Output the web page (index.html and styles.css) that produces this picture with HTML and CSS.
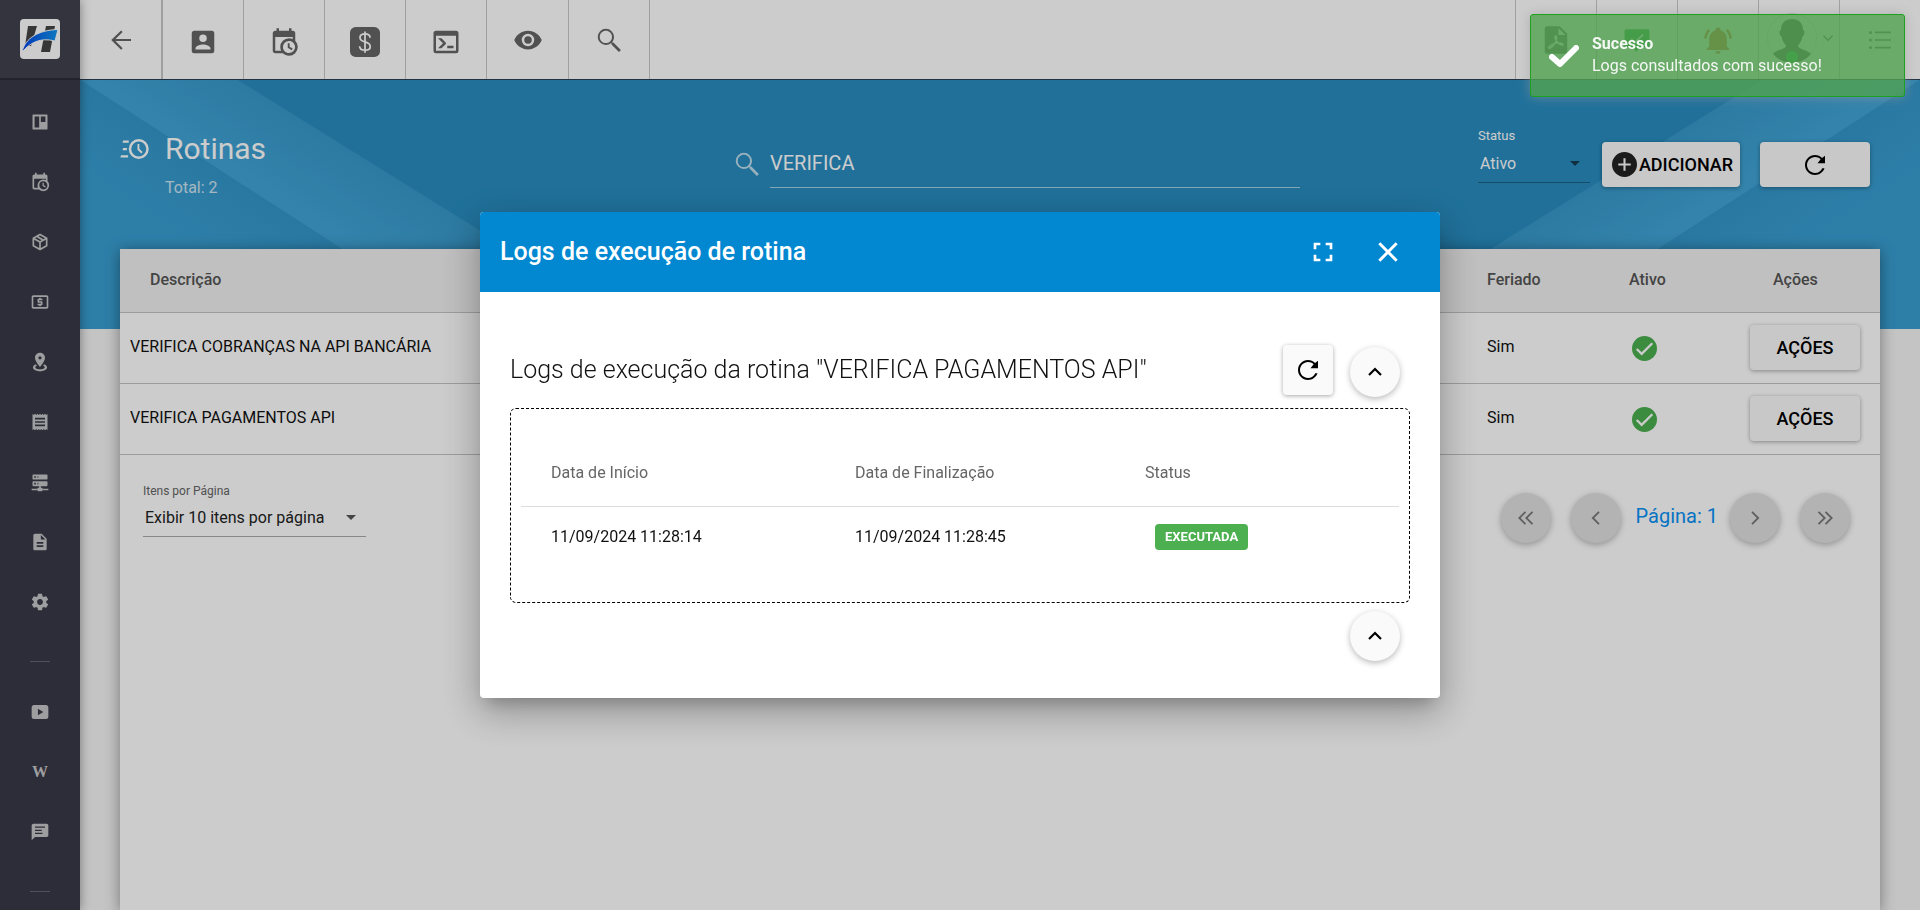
FILE: index.html
```html
<!DOCTYPE html>
<html lang="pt-BR">
<head>
<meta charset="utf-8">
<meta name="viewport" content="width=device-width, initial-scale=1">
<title>Rotinas</title>
<link rel="stylesheet" href="styles.css">
</head>
<body>
<svg class="sprite" aria-hidden="true">
  <symbol id="i-back" viewBox="0 0 24 24"><path d="M20,11.200V12.800H7.600L13.300,18.500L12.080,19.700L4.160,12L12.080,4.300L13.300,5.500L7.600,11.200H20Z"/></symbol>
  <symbol id="i-account" viewBox="0 0 24 24"><path d="M6,17C6,15 10,13.9 12,13.9C14,13.9 18,15 18,17V18H6M15,9A3,3 0 0,1 12,12A3,3 0 0,1 9,9A3,3 0 0,1 12,6A3,3 0 0,1 15,9M3,5V19A2,2 0 0,0 5,21H19A2,2 0 0,0 21,19V5A2,2 0 0,0 19,3H5C3.89,3 3,3.9 3,5Z"/></symbol>
  <symbol id="i-calclock" viewBox="0 0 24 24"><path d="M15,13H16.5V15.82L18.94,17.23L18.19,18.53L15,16.69V13M19,8H5V19H9.67C9.24,18.09 9,17.07 9,16A7,7 0 0,1 16,9C17.07,9 18.09,9.24 19,9.67V8M5,21C3.89,21 3,20.1 3,19V5C3,3.89 3.89,3 5,3H6V1H8V3H16V1H18V3H19A2,2 0 0,1 21,5V11.1C22.24,12.36 23,14.09 23,16A7,7 0 0,1 16,23C14.09,23 12.36,22.24 11.1,21H5M16,11.15A4.85,4.85 0 0,0 11.15,16C11.15,18.68 13.32,20.85 16,20.85A4.85,4.85 0 0,0 20.85,16C20.85,13.32 18.68,11.15 16,11.15Z"/></symbol>
  <symbol id="i-dollar" viewBox="0 0 24 24"><rect width="24" height="24" rx="4.500"/><path d="M12 3.500v17M16 8.500c0-2-1.600-3-4-3s-4 1-4 3c0 4.500 8.200 2.200 8.200 7 0 2-1.700 3-4.200 3s-4.300-1.100-4.300-3.200" fill="none" stroke="#fff" stroke-width="1.400"/></symbol>
  <symbol id="i-console" viewBox="0 0 24 24"><path fill-rule="evenodd" d="M4 3H20A2 2 0 0 1 22 5V19A2 2 0 0 1 20 21H4A2 2 0 0 1 2 19V5A2 2 0 0 1 4 3M4 7V19H20V7Z"/><path d="M13 17v-2h5v2zM9.600 13L5.600 9h2.800l3.300 3.300c.4.400.4 1 0 1.400L8.400 17H5.600z"/></symbol>
  <symbol id="i-eye" viewBox="0 0 24 24"><path d="M12,9A3,3 0 0,0 9,12A3,3 0 0,0 12,15A3,3 0 0,0 15,12A3,3 0 0,0 12,9M12,17A5,5 0 0,1 7,12A5,5 0 0,1 12,7A5,5 0 0,1 17,12A5,5 0 0,1 12,17M12,4.5C7,4.5 2.730,7.610 1,12C2.730,16.390 7,19.5 12,19.5C17,19.5 21.270,16.390 23,12C21.270,7.610 17,4.5 12,4.5Z"/></symbol>
  <symbol id="i-search" viewBox="0 0 24 24"><path d="M9.5,3A6.5,6.5 0 0,1 16,9.5C16,11.11 15.41,12.59 14.44,13.73L14.71,14H15.5L21.5,20L20,21.5L14,15.5V14.71L13.73,14.44C12.59,15.41 11.11,16 9.5,16A6.5,6.5 0 0,1 3,9.5A6.5,6.5 0 0,1 9.5,3M9.5,4.600C7,4.600 4.600,6.600 4.600,9.500C4.600,12.400 7,14.400 9.5,14.400C12,14.400 14.400,12.400 14.400,9.500C14.400,6.600 12,4.600 9.5,4.600Z"/></symbol>
  <symbol id="i-pdf" viewBox="0 0 24 24"><path fill-rule="evenodd" d="M5 1h10l6 6v14a2 2 0 0 1-2 2H5a2 2 0 0 1-2-2V3a2 2 0 0 1 2-2zm9 1.500V8h5.500z"/><path d="M6.500 18.500c-1.600-.5 2.500-3.500 5.500-4s6 .2 5.500 1.300c-1 1.500-6.500-3.300-6.300-6.300.3-1.500 1.900-.7 1.100 2.200-1 3.500-4.300 7.600-5.800 6.800z" fill="none" stroke="#fff" stroke-width="1.200"/></symbol>
  <symbol id="i-chat" viewBox="0 0 24 24"><path d="M2 2h20a1.500 1.500 0 0 1 1.500 1.500v14a1.500 1.500 0 0 1-1.500 1.500h-7l-4 4-2-4H2a1.500 1.500 0 0 1-1.500-1.500v-14A1.500 1.500 0 0 1 2 2z"/><path d="M6.500 11l3.500 3.500L17.500 7" fill="none" stroke="#fff" stroke-width="1.800"/></symbol>
  <symbol id="i-bell" viewBox="0 0 24 24"><path d="M21,19V20H3V19L5,17V11C5,7.9 7.030,5.170 10,4.290C10,4.190 10,4.1 10,4A2,2 0 0,1 12,2A2,2 0 0,1 14,4C14,4.1 14,4.190 14,4.290C16.970,5.170 19,7.9 19,11V17L21,19M14,21A2,2 0 0,1 12,23A2,2 0 0,1 10,21M19.750,3.190L18.330,4.610C20.040,6.3 21,8.6 21,11H23C23,8.070 21.840,5.250 19.750,3.190M1,11H3C3,8.6 3.960,6.3 5.670,4.610L4.250,3.190C2.160,5.250 1,8.070 1,11Z"/></symbol>
  <symbol id="i-list" viewBox="0 0 24 24"><path d="M7 3.600h16v1.600H7zM7 11.200h16v1.600H7zM7 18.800h16v1.600H7z"/><circle cx="2.500" cy="4.400" r="1.500"/><circle cx="2.500" cy="12" r="1.500"/><circle cx="2.500" cy="19.600" r="1.500"/></symbol>
  <symbol id="i-board" viewBox="0 0 24 24"><path fill-rule="evenodd" d="M4 3h16a1 1 0 0 1 1 1v16a1 1 0 0 1-1 1H4a1 1 0 0 1-1-1V4a1 1 0 0 1 1-1zm1.500 2.500v13H11v-13zm7.500 0V12h5.500V5.500z"/></symbol>
  <symbol id="i-box" viewBox="0 0 24 24"><path d="M21,16.5C21,16.880 20.790,17.210 20.470,17.380L12.570,21.820C12.410,21.940 12.210,22 12,22C11.790,22 11.590,21.940 11.430,21.820L3.530,17.380C3.210,17.210 3,16.880 3,16.5V7.5C3,7.120 3.210,6.790 3.530,6.620L11.430,2.180C11.590,2.060 11.790,2 12,2C12.210,2 12.410,2.060 12.570,2.180L20.470,6.620C20.790,6.790 21,7.120 21,7.5V16.5M12,4.150L10.110,5.220L16,8.610L17.960,7.5L12,4.150M6.040,7.5L12,10.850L13.960,9.750L8.080,6.350L6.040,7.5M5,15.910L11,19.290V12.580L5,9.210V15.910M19,15.910V9.210L13,12.580V19.290L19,15.910Z"/></symbol>
  <symbol id="i-atm" viewBox="0 0 24 24"><path d="M11 17h2v-1h1c.55 0 1-.45 1-1v-3c0-.55-.45-1-1-1h-3v-1h4V8h-2V7h-2v1h-1c-.55 0-1 .45-1 1v3c0 .55.45 1 1 1h3v1H9v2h2v1zm9-13H4c-1.110 0-1.990.89-1.990 2L2 18c0 1.110.89 2 2 2h16c1.110 0 2-.89 2-2V6c0-1.110-.89-2-2-2zm0 14H4V6h16v12z"/></symbol>
  <symbol id="i-pin" viewBox="0 0 24 24"><path d="M12,1C15.310,1 18,3.660 18,6.950C18,11.410 12,18 12,18C12,18 6,11.410 6,6.950C6,3.660 8.690,1 12,1M12,5A2,2 0 0,0 10,7A2,2 0 0,0 12,9A2,2 0 0,0 14,7A2,2 0 0,0 12,5M20.500,18.500C20.500,21 16.420,23 12,23C7.580,23 3.500,21 3.500,18.500C3.500,17 5.220,15.560 7.110,14.830L8.200,16.400C7,16.900 6.300,17.500 6.300,18.200C6.300,19.600 8.690,20.700 12,20.700C15.310,20.700 17.700,19.600 17.700,18.200C17.700,17.500 17,16.900 15.800,16.400L16.890,14.830C18.780,15.560 20.500,17 20.500,18.500Z"/></symbol>
  <symbol id="i-receipt" viewBox="0 0 24 24"><path d="M18 17H6v-2h12v2zm0-4H6v-2h12v2zm0-4H6V7h12v2zM3 22l1.5-1.5L6 22l1.5-1.5L9 22l1.5-1.5L12 22l1.5-1.5L15 22l1.5-1.5L18 22l1.5-1.5L21 22V2l-1.5 1.5L18 2l-1.5 1.5L15 2l-1.5 1.5L12 2l-1.5 1.5L9 2 7.5 3.5 6 2 4.5 3.5 3 2v20z"/></symbol>
  <symbol id="i-server" viewBox="0 0 24 24"><path d="M13,19H14A1,1 0 0,1 15,20H22V22H15A1,1 0 0,1 14,23H10A1,1 0 0,1 9,22H2V20H9A1,1 0 0,1 10,19H11V17H4A1,1 0 0,1 3,16V12A1,1 0 0,1 4,11H20A1,1 0 0,1 21,12V16A1,1 0 0,1 20,17H13V19M4,3H20A1,1 0 0,1 21,4V8A1,1 0 0,1 20,9H4A1,1 0 0,1 3,8V4A1,1 0 0,1 4,3M9,7H10V5H9V7M9,15H10V13H9V15M5,5V7H7V5H5M5,13V15H7V13H5Z"/></symbol>
  <symbol id="i-file" viewBox="0 0 24 24"><path d="M14 2H6c-1.100 0-1.990.9-1.990 2L4 20c0 1.100.89 2 1.990 2H18c1.100 0 2-.9 2-2V8l-6-6zm2 16H8v-2h8v2zm0-4H8v-2h8v2zm-3-5V3.500L18.500 9H13z"/></symbol>
  <symbol id="i-gear" viewBox="0 0 24 24"><path d="M19.430 12.980c.04-.32.07-.64.07-.98s-.03-.66-.07-.98l2.110-1.650c.19-.15.24-.42.12-.64l-2-3.460c-.12-.22-.39-.3-.61-.22l-2.490 1c-.52-.4-1.080-.73-1.690-.98l-.38-2.650C14.460 2.180 14.250 2 14 2h-4c-.25 0-.46.18-.49.42l-.38 2.650c-.61.25-1.170.59-1.690.98l-2.490-1c-.23-.09-.49 0-.61.22l-2 3.460c-.13.22-.07.49.12.64l2.110 1.650c-.04.32-.07.65-.07.98s.03.66.07.98l-2.110 1.650c-.19.15-.24.42-.12.64l2 3.460c.12.22.39.3.61.22l2.490-1c.52.4 1.080.73 1.690.98l.38 2.650c.03.24.24.42.49.42h4c.25 0 .46-.18.49-.42l.38-2.650c.61-.25 1.170-.59 1.690-.98l2.490 1c.23.09.49 0 .61-.22l2-3.460c.12-.22.07-.49-.12-.64l-2.110-1.650zM12 15.500c-1.930 0-3.500-1.570-3.500-3.500s1.570-3.500 3.500-3.500 3.500 1.570 3.500 3.500-1.570 3.500-3.500 3.500z"/></symbol>
  <symbol id="i-video" viewBox="0 0 24 24"><path fill-rule="evenodd" d="M5 3.500h14c2 0 3 1 3 3v11c0 2-1 3-3 3H5c-2 0-3-1-3-3v-11c0-2 1-3 3-3zM9.500 8v8l6.500-4z"/></symbol>
  <symbol id="i-message" viewBox="0 0 24 24"><path fill-rule="evenodd" d="M20 2H4c-1.100 0-1.990.9-1.990 2L2 22l4-4h14c1.100 0 2-.9 2-2V4c0-1.100-.9-2-2-2zM6 5.500h12v1.500H6zM6 9.300h8v1.500H6zM6 13h9v1.500H6z"/></symbol>
  <symbol id="i-clockfast" viewBox="0 0 24 24"><path fill-rule="evenodd" d="M15 4a8 8 0 1 1 0 16 8 8 0 0 1 0-16zm0 2a6 6 0 1 0 0 12 6 6 0 0 0 0-12z"/><path d="M14 8h1.500v3.800l2.600 2.600-1.100 1.100-3-3zM.800 17h5.700v1.800H.300zM2.500 11.100h3v1.800H2zM2.500 5.200H7V7H2z"/></symbol>
  <symbol id="i-plus" viewBox="0 0 24 24"><path fill-rule="evenodd" d="M12 0a12 12 0 1 1 0 24 12 12 0 0 1 0-24zM11 6v5H6v2h5v5h2v-5h5v-2h-5V6z"/></symbol>
  <symbol id="i-refresh" viewBox="0 0 24 24"><path d="M17.650 6.350C16.200 4.900 14.210 4 12 4c-4.420 0-7.990 3.580-7.990 8s3.570 8 7.990 8c3.500 0 6.500-2.300 7.600-5.400h-1.800c-1 2.300-3.200 3.800-5.800 3.800-3.500 0-6.400-2.900-6.400-6.400S8.500 5.600 12 5.600c1.760 0 3.340.7 4.500 1.850L14 10.500h6V4.500z"/></symbol>
  <symbol id="i-ok" viewBox="0 0 24 24"><circle cx="12" cy="12" r="12" fill="#4caf50"/><path d="M4.500 12.500l4.800 4.600L19.500 7" fill="none" stroke="#fff" stroke-width="2.200"/></symbol>
  <symbol id="i-full" viewBox="0 0 24 24"><path d="M5,5H10V7H7V10H5V5M14,5H19V10H17V7H14V5M17,14H19V19H14V17H17V14M10,17V19H5V14H7V17H10Z"/></symbol>
  <symbol id="i-close" viewBox="0 0 24 24"><path d="M5.500 5.500l13 13M18.500 5.500l-13 13" fill="none" stroke="currentColor" stroke-width="2.200"/></symbol>
  <symbol id="i-up" viewBox="0 0 24 24"><path d="M6 15l6-6 6 6" fill="none" stroke="currentColor" stroke-width="2.200"/></symbol>
  <symbol id="i-down" viewBox="0 0 24 24"><path d="M6 9l6 6 6-6" fill="none" stroke="currentColor" stroke-width="2"/></symbol>
  <symbol id="i-first" viewBox="0 0 24 24"><path d="M11.500 5.800L5.300 12l6.200 6.200M18.500 5.800L12.300 12l6.200 6.200" fill="none" stroke="currentColor" stroke-width="1.800"/></symbol>
  <symbol id="i-prev" viewBox="0 0 24 24"><path d="M15 5.800L8.800 12l6.200 6.200" fill="none" stroke="currentColor" stroke-width="1.800"/></symbol>
  <symbol id="i-next" viewBox="0 0 24 24"><path d="M9 5.800l6.200 6.200L9 18.200" fill="none" stroke="currentColor" stroke-width="1.800"/></symbol>
  <symbol id="i-last" viewBox="0 0 24 24"><path d="M5.500 5.800l6.200 6.200-6.200 6.200M12.500 5.800l6.200 6.200-6.200 6.200" fill="none" stroke="currentColor" stroke-width="1.800"/></symbol>
  <symbol id="i-caret" viewBox="0 0 10 5"><path d="M0 0h10L5 5z"/></symbol>
</svg>

<div class="app">
  <nav class="sidebar" aria-label="Menu">
    <div class="brand">
      <svg class="logo" viewBox="0 0 40 40" role="img" aria-label="Logo">
        <defs><linearGradient id="swoosh" x1="0" x2="1"><stop offset="0" stop-color="#0048e8"/><stop offset="1" stop-color="#1496ee"/></linearGradient></defs>
        <rect width="40" height="40" rx="4" fill="#fff"/>
        <path d="M8 7h9l-6 20H5zM26 7h9l-5 26h-9z" fill="#444"/>
        <path d="M2 33C5 19 19 11 38 10.500L35 22C20 18 10 24 2 33z" fill="url(#swoosh)" stroke="#fff"/>
      </svg>
    </div>
    <div class="side-list">
      <a class="side-item" href="#" aria-label="Painel"><svg><use href="#i-board"/></svg></a>
      <a class="side-item" href="#" aria-label="Agenda"><svg><use href="#i-calclock"/></svg></a>
      <a class="side-item" href="#" aria-label="Produtos"><svg><use href="#i-box"/></svg></a>
      <a class="side-item" href="#" aria-label="Financeiro"><svg><use href="#i-atm"/></svg></a>
      <a class="side-item" href="#" aria-label="Mapa"><svg><use href="#i-pin"/></svg></a>
      <a class="side-item" href="#" aria-label="Notas"><svg><use href="#i-receipt"/></svg></a>
      <a class="side-item" href="#" aria-label="Servidores"><svg><use href="#i-server"/></svg></a>
      <a class="side-item" href="#" aria-label="Documentos"><svg><use href="#i-file"/></svg></a>
      <a class="side-item" href="#" aria-label="Configurações"><svg><use href="#i-gear"/></svg></a>
      <hr class="side-sep">
      <a class="side-item" href="#" aria-label="Vídeos"><svg><use href="#i-video"/></svg></a>
      <a class="side-item side-wiki" href="#" aria-label="Wiki">W</a>
      <a class="side-item" href="#" aria-label="Mensagens"><svg><use href="#i-message"/></svg></a>
      <hr class="side-sep">
    </div>
  </nav>

  <div class="main">
    <header class="topbar">
      <div class="tools">
        <button class="tool tool-wide raised" aria-label="Voltar"><svg><use href="#i-back"/></svg></button>
        <button class="tool" aria-label="Clientes"><svg><use href="#i-account"/></svg></button>
        <button class="tool" aria-label="Agenda"><svg><use href="#i-calclock"/></svg></button>
        <button class="tool" aria-label="Financeiro"><svg><use href="#i-dollar"/></svg></button>
        <button class="tool" aria-label="Console"><svg><use href="#i-console"/></svg></button>
        <button class="tool tool-wide raised" aria-label="Visualizar"><svg><use href="#i-eye"/></svg></button>
        <button class="tool raised" aria-label="Pesquisar"><svg><use href="#i-search"/></svg></button>
      </div>
      <div class="tools tools-right">
        <button class="tool raised" aria-label="Relatórios"><svg><use href="#i-pdf"/></svg></button>
        <button class="tool chat raised" aria-label="Conversas"><svg><use href="#i-chat"/></svg></button>
        <button class="tool bell raised" aria-label="Notificações"><svg><use href="#i-bell"/></svg></button>
        <button class="tool user" aria-label="Usuário">
          <svg class="avatar" viewBox="0 0 50 50"><circle cx="25" cy="25" r="24.500" fill="#fff" stroke="#ddd"/><path d="M25 6c7 0 11 4 11 11 2 0 2 5-.5 6.500C35 28 32 31 31 33c0 3 10 4 13 8a25 25 0 0 1-38 0c3-4 13-5 13-8-1-2-4-5-4.500-9.500C12 22 12 17 14 17c0-7 4-11 11-11z" fill="#555"/><circle cx="25" cy="44" r="6" fill="#1cbf33"/></svg>
          <svg class="chev"><use href="#i-down"/></svg>
        </button>
        <button class="tool raised" aria-label="Lista"><svg><use href="#i-list"/></svg></button>
      </div>
    </header>

    <section class="banner">
      <svg class="banner-art" viewBox="0 0 1840 248" preserveAspectRatio="none" aria-hidden="true">
        <defs>
          <linearGradient id="low-l" gradientUnits="userSpaceOnUse" x1="193" y1="124" x2="151" y2="190"><stop offset="0" stop-color="#3497cb"/><stop offset="1" stop-color="#399fd3"/></linearGradient>
          <linearGradient id="low-r" gradientUnits="userSpaceOnUse" x1="1647" y1="124" x2="1689" y2="190"><stop offset="0" stop-color="#3497cb"/><stop offset="1" stop-color="#399fd3"/></linearGradient>
          <linearGradient id="band-l" gradientUnits="userSpaceOnUse" x1="358" y1="124" x2="316" y2="190"><stop offset="0" stop-color="#3899cb"/><stop offset="1" stop-color="#40a4d7"/></linearGradient>
          <linearGradient id="band-r" gradientUnits="userSpaceOnUse" x1="1482" y1="124" x2="1524" y2="190"><stop offset="0" stop-color="#3899cb"/><stop offset="1" stop-color="#40a4d7"/></linearGradient>
        </defs>
        <path d="M0 0h158l400 248H386z" fill="url(#band-l)"/>
        <path d="M0 0l386 248H0z" fill="url(#low-l)"/>
        <path d="M1840 0h-158l-400 248h172z" fill="url(#band-r)"/>
        <path d="M1840 0l-386 248h386z" fill="url(#low-r)"/>
      </svg>
      <div class="banner-row">
        <div class="title">
          <svg><use href="#i-clockfast"/></svg>
          <h1>Rotinas</h1>
          <p>Total: 2</p>
        </div>
        <label class="search">
          <svg><use href="#i-search"/></svg>
          <input type="text" value="VERIFICA" aria-label="Pesquisar rotinas">
        </label>
        <div class="actions">
          <div class="field status">
            <label for="status">Status</label>
            <div class="pick"><select id="status"><option>Ativo</option></select><svg><use href="#i-caret"/></svg></div>
          </div>
          <button class="btn add"><svg><use href="#i-plus"/></svg>ADICIONAR</button>
          <button class="btn reload" aria-label="Atualizar"><svg><use href="#i-refresh"/></svg></button>
        </div>
      </div>
    </section>

    <main class="card">
      <table class="grid">
        <colgroup><col><col class="c-feriado"><col class="c-ativo"><col class="c-acoes"></colgroup>
        <thead><tr><th class="h-desc">Descrição</th><th>Feriado</th><th>Ativo</th><th class="h-acoes">Ações</th></tr></thead>
        <tbody>
          <tr><td>VERIFICA COBRANÇAS NA API BANCÁRIA</td><td>Sim</td><td class="t-ok"><svg role="img" aria-label="Ativo"><use href="#i-ok"/></svg></td><td class="t-btn"><button class="btn row-btn">AÇÕES</button></td></tr>
          <tr><td>VERIFICA PAGAMENTOS API</td><td>Sim</td><td class="t-ok"><svg role="img" aria-label="Ativo"><use href="#i-ok"/></svg></td><td class="t-btn"><button class="btn row-btn">AÇÕES</button></td></tr>
        </tbody>
      </table>
      <div class="foot">
        <div class="field per-page">
          <label for="per-page">Itens por Página</label>
          <div class="pick"><select id="per-page"><option>Exibir 10 itens por página</option></select><svg><use href="#i-caret"/></svg></div>
        </div>
        <div class="pager">
          <button class="round grey" aria-label="Primeira"><svg><use href="#i-first"/></svg></button>
          <button class="round grey" aria-label="Anterior"><svg><use href="#i-prev"/></svg></button>
          <span class="page">Página: 1</span>
          <button class="round grey" aria-label="Próxima"><svg><use href="#i-next"/></svg></button>
          <button class="round grey" aria-label="Última"><svg><use href="#i-last"/></svg></button>
        </div>
      </div>
    </main>
  </div>
</div>

<div class="backdrop">
  <div class="modal" role="dialog" aria-labelledby="modal-title">
    <div class="modal-bar">
      <h2 id="modal-title">Logs de execução de rotina</h2>
      <button class="bar-btn" aria-label="Tela cheia"><svg><use href="#i-full"/></svg></button>
      <button class="bar-btn" aria-label="Fechar"><svg><use href="#i-close"/></svg></button>
    </div>
    <div class="modal-body">
      <div class="log-head">
        <h3>Logs de execução da rotina "VERIFICA PAGAMENTOS API"</h3>
        <button class="btn square" aria-label="Atualizar"><svg><use href="#i-refresh"/></svg></button>
        <button class="round" aria-label="Recolher"><svg><use href="#i-up"/></svg></button>
      </div>
      <div class="log-box">
        <table class="logs">
          <colgroup><col class="l-start"><col class="l-end"><col></colgroup>
          <thead><tr><th>Data de Início</th><th>Data de Finalização</th><th>Status</th></tr></thead>
          <tbody><tr><td>11/09/2024 11:28:14</td><td>11/09/2024 11:28:45</td><td><span class="badge">EXECUTADA</span></td></tr></tbody>
        </table>
      </div>
      <div class="log-foot"><button class="round" aria-label="Subir"><svg><use href="#i-up"/></svg></button></div>
    </div>
  </div>
</div>

<div class="toast" role="status">
  <svg viewBox="0 0 30 22"><path d="M3 12l8 7L27 3" fill="none" stroke="#fff" stroke-width="6" stroke-linecap="round" stroke-linejoin="round"/></svg>
  <div><strong>Sucesso</strong><p>Logs consultados com sucesso!</p></div>
</div>
</body>
</html>
```

FILE: styles.css
```css
* { box-sizing: border-box; }
body {
  margin: 0;
  height: 100vh;
  overflow: hidden;
  background: #f5f5f5;
  color: #111;
  font-family: Roboto, "Liberation Sans", sans-serif;
  font-size: 16px;
  line-height: 24px;
}
h1, h2, h3, p { margin: 0; font-weight: 400; }
button, input, select { font: inherit; color: inherit; border: 0; padding: 0; background: none; margin: 0; }
svg { display: block; fill: currentColor; flex: none; }
.sprite { position: absolute; width: 0; height: 0; }

.app { display: flex; height: 100vh; }

/* Sidebar */
.sidebar { width: 80px; flex: none; background: #383946; color: #c6c6c8; box-shadow: 0 0 10px rgba(0,0,0,.4); z-index: 2; overflow: hidden; }
.brand { height: 80px; padding: 19px 20px; background: #41424f; border-bottom: 2px solid #2b2c36; }
.logo { width: 40px; height: 40px; }
.side-list { padding-top: 12px; }
.side-item { display: flex; align-items: center; justify-content: center; height: 60px; color: inherit; text-decoration: none; }
.side-item svg { width: 20px; height: 20px; }
.side-wiki { font-family: "Liberation Serif", serif; font-size: 16px; font-weight: 700; }
.side-sep { width: 20px; height: 1px; border: 0; background: #62636e; margin: 29px auto 20px; }

.main { flex: 1; min-width: 0; display: flex; flex-direction: column; }

/* Toolbar */
.topbar { display: flex; justify-content: space-between; height: 80px; flex: none; background: #fff; border-bottom: 1px solid #2a3f55; color: #666; }
.tools { display: flex; }
.tool { display: flex; align-items: center; justify-content: center; width: 81px; padding-top: 4px; border-right: 1px solid #c8c8c8; }
.tool-wide { width: 82px; }
.tool-wide:first-child { width: 83px; border-right-width: 2px; }
.raised { padding-top: 0; }
.tool svg { width: 30px; height: 30px; }
.tools-right { border-left: 1px solid #c8c8c8; }
.tools-right .tool:last-child { width: 80px; border-right: 0; }
.tool.chat svg { width: 26px; height: 26px; color: #1aa83a; }
.tool.bell svg { color: #e2622b; }
.tools-right .tool:last-child svg { width: 24px; height: 24px; }
.tool.user { padding: 0 0 4px 6px; gap: 2px; }
.tool.user .avatar { width: 50px; height: 50px; }
.tool.user .chev { width: 18px; height: 18px; }

/* Banner */
.banner { position: relative; height: 249px; flex: none; background: #288dc1; color: #fff; margin-bottom: -80px; }
.banner-art { position: absolute; inset: 0; width: 100%; height: 100%; }
.banner-row { position: relative; display: grid; grid-template-columns: 1fr auto 1fr; padding: 46px 50px 0 40px; }
.title { display: grid; grid-template-columns: 45px auto; justify-content: start; align-items: center; align-content: start; row-gap: 8px; }
.title svg { width: 30px; height: 30px; }
.title h1 { font-size: 30px; line-height: 46px; }
.title p { grid-column: 2; opacity: .75; line-height: 16px; }
.search { display: flex; align-items: flex-start; gap: 8px; padding: 12px 0 0 42px; }
.search svg { width: 30px; height: 30px; margin-top: 11px; opacity: .7; }
.search input { width: 530px; height: 50px; font-size: 20px; border-bottom: 1px solid rgba(255,255,255,.6); }
.actions { display: flex; justify-content: flex-end; align-items: flex-start; gap: 20px; padding-top: 16px; }
.field label { display: block; font-size: 12px; line-height: 18px; }
.pick { display: flex; align-items: center; }
.pick select { flex: 1; appearance: none; height: 36px; padding-left: 2px; border-radius: 0; }
.pick svg { width: 10px; height: 5px; margin-right: 10px; }
.status { width: 112px; margin: -15px -8px 0 0; }
.status label { font-size: 13px; }
.status .pick { border-bottom: 1px solid rgba(0,0,0,.3); height: 38px; }
.status .pick svg { color: #143c52; }
.btn { display: flex; align-items: center; justify-content: center; height: 45px; border-radius: 4px; background: #fafafa; color: #000; font-size: 18px; font-weight: 500; box-shadow: 0 1px 4px rgba(0,0,0,.35); }
.add { width: 138px; gap: 2px; padding-left: 3px; }
.add svg { width: 25px; height: 25px; color: #222; }
.reload { width: 110px; }
.reload svg, .square svg { width: 30px; height: 30px; }

/* Card with the routine table */
.card { position: relative; flex: 1; margin: 0 40px; background: #fff; box-shadow: 0 2px 14px rgba(0,0,0,.4); }
.grid { width: 100%; border-collapse: collapse; table-layout: fixed; }
.grid th, .grid td { padding: 0 10px; text-align: left; border-bottom: 1px solid #c4c4c4; }
.grid th { height: 63px; background: #f0f0f0; color: #555; font-weight: 500; }
.grid td { height: 71px; font-weight: 400; padding-bottom: 1px; }
.c-feriado { width: 142px; }
.c-ativo { width: 121px; }
.c-acoes { width: 140px; }
.grid .h-desc { padding-left: 30px; }
.grid .h-acoes { padding-left: 33px; }
.grid .t-ok { padding: 1px 13px 0; }
.t-ok svg { width: 25px; height: 25px; }
.grid .t-btn { padding-bottom: 0; }
.row-btn { width: 110px; }
.foot { display: flex; justify-content: space-between; padding: 27px 30px 0 23px; }
.per-page { width: 223px; color: #222; }
.per-page label { color: #666; }
.per-page .pick { border-bottom: 1px solid #aaa; height: 37px; }
.per-page .pick svg { color: #555; }
.pager { display: flex; align-items: center; gap: 20px; padding-top: 11px; }
.round { display: flex; align-items: center; justify-content: center; width: 50px; height: 50px; border-radius: 50%; background: #fafafa; box-shadow: 0 2px 6px rgba(0,0,0,.28); color: #000; flex: none; }
.round svg { width: 24px; height: 24px; }
.grey { background: #e0e0e0; color: #777; }
.page { font-size: 20px; color: #0890f5; margin: 0 -8px 4px -5px; }

/* Modal */
.backdrop { position: fixed; inset: 0; z-index: 5; display: flex; align-items: center; justify-content: center; background: rgba(0,0,0,.2); }
.modal { width: 50vw; background: #fff; border-radius: 4px; overflow: hidden; box-shadow: 0 11px 15px -7px rgba(0,0,0,.2), 0 12px 38px 3px rgba(0,0,0,.28); }
.modal-bar { display: flex; align-items: center; height: 80px; padding: 0 36px 0 20px; gap: 33px; background: #0288d1; color: #fff; }
.modal-bar h2 { flex: 1; font-size: 25px; font-weight: 500; }
.bar-btn svg { width: 32px; height: 32px; }
.modal-body { padding: 53px 30px 37px; }
.log-head { display: flex; align-items: center; gap: 17px; height: 50px; padding-right: 10px; margin-bottom: 13px; }
.log-head h3 { flex: 1; font-size: 25px; font-weight: 300; }
.log-head .round { margin-top: 4px; }
.square { width: 50px; height: 50px; }
.log-box { border: 1px dashed #000; border-radius: 6px; padding: 32px 10px 31px; }
.logs { width: 100%; border-collapse: collapse; table-layout: fixed; }
.logs th, .logs td { padding: 0 30px; height: 65px; text-align: left; font-weight: 400; }
.logs th { border-bottom: 1px solid #ddd; color: #666; }
.logs td { padding-bottom: 3px; }
.l-start { width: 304px; }
.l-end { width: 290px; }
.badge { display: inline-block; margin-left: 10px; padding: 0 10px; border-radius: 4px; background: #4caf50; color: #fff; font-size: 13px; font-weight: 700; line-height: 26px; }
.log-foot { display: flex; justify-content: flex-end; padding: 8px 10px 0 0; }

/* Toast */
.toast { position: fixed; top: 14px; right: 15px; z-index: 9; display: flex; gap: 13px; width: 375px; height: 83px; padding: 18px; border: 1px solid #1fa01f; border-radius: 3px; background: rgba(81,163,81,.8); color: #f4f8f4; line-height: 22px; box-shadow: 0 0 12px rgba(153,153,153,.6); }
.toast svg { width: 30px; height: 22px; margin-top: 12px; }
```
